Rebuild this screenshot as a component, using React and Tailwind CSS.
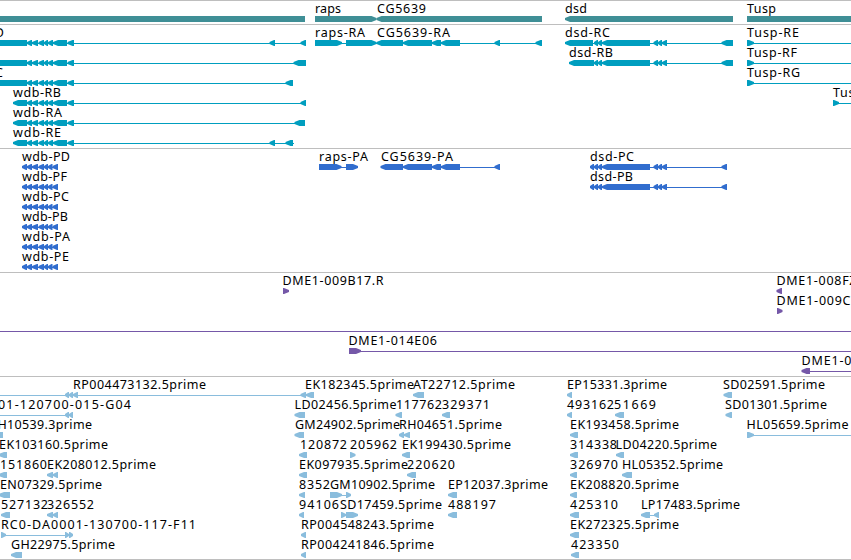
const ROW = 20;
const WIDTH = 851;

// exons shared by every wdb transcript
const WDB = [[27, 32], [32, 38], [38.5, 44], [44, 48], [48, 53], [53, 67], [67.5, 74]];
const WDB_P = [[22, 27], [27, 32], [32, 38], [38.5, 44], [44, 48], [48, 52.5], [52.5, 58]];
const DSD = [[594, 598], [598, 602], [602, 650], [653.5, 658], [658, 662], [662, 667]];

// label: [text, x, width], line: [from, to], exons: [from, to][]
const TRACKS = [
  {
    id: "genes",
    fill: "fill-[#3f8f96]",
    height: 24,
    features: [
      { row: 0, exons: [[-20, 305]], flat: true },
      { row: 0, label: ["raps", 315, 26], exons: [[315, 376.5]], fwd: true },
      { row: 0, label: ["CG5639", 377, 49], exons: [[376.5, 542]] },
      { row: 0, label: ["dsd", 565, 22], exons: [[565, 733]] },
      { row: 0, label: ["Tusp", 747, 29], exons: [[747, 880]], fwd: true },
    ],
  },
  {
    id: "transcripts",
    fill: "fill-[#009ebf]",
    height: 124,
    features: [
      { row: 0, label: ["wdb-RD", -44, 48], line: [0, 305], exons: [[-20, 27], ...WDB, [269.5, 275], [300.5, 306]] },
      { row: 1, line: [0, 305], exons: [[-20, 27], ...WDB, [293.5, 306]] },
      { row: 2, label: ["wdb-RC", -45, 48], line: [0, 293], exons: [[-20, 27], ...WDB, [285.5, 293]] },
      { row: 3, label: ["wdb-RB", 13, 48], line: [13, 305], exons: [[13, 27], ...WDB, [300.5, 306]] },
      { row: 4, label: ["wdb-RA", 13, 49], line: [13, 305], exons: [[13, 27], ...WDB, [294.5, 305]] },
      { row: 5, label: ["wdb-RE", 13, 48], line: [13, 294], exons: [[13, 27], ...WDB, [269.5, 275], [285.5, 293]] },
      { row: 0, label: ["raps-RA", 315, 50], line: [315, 377], exons: [[315, 342], [346, 376.5]], fwd: true },
      { row: 0, label: ["CG5639-RA", 377, 73], line: [377, 542], exons: [[376.5, 403], [403, 432], [432, 441], [441, 460], [494.5, 500], [535.5, 542]] },
      { row: 0, label: ["dsd-RC", 565, 45], line: [565, 733], exons: [[565, 593], ...DSD, [721.5, 733]] },
      { row: 1, label: ["dsd-RB", 569, 44], line: [569, 733], exons: [[569, 594], ...DSD, [721.5, 733]] },
      { row: 0, label: ["Tusp-RE", 747, 52], line: [747, 851], exons: [[747, 754]], fwd: true },
      { row: 1, label: ["Tusp-RF", 747, 50], line: [747, 851], exons: [[747, 754]], fwd: true },
      { row: 2, label: ["Tusp-RG", 747, 53], line: [747, 851], exons: [[747, 754]], fwd: true },
      { row: 3, label: ["Tusp-RH", 833, 53], line: [833, 851], exons: [[833, 839]], fwd: true },
    ],
  },
  {
    id: "proteins",
    fill: "fill-[#316dce]",
    height: 124,
    features: [
      { row: 0, label: ["wdb-PD", 22, 48], line: [22, 58], exons: WDB_P },
      { row: 1, label: ["wdb-PF", 22, 45], line: [22, 58], exons: WDB_P },
      { row: 2, label: ["wdb-PC", 22, 47], line: [22, 58], exons: WDB_P },
      { row: 3, label: ["wdb-PB", 22, 46], line: [22, 58], exons: WDB_P },
      { row: 4, label: ["wdb-PA", 22, 48], line: [22, 58], exons: WDB_P },
      { row: 5, label: ["wdb-PE", 22, 47], line: [22, 58], exons: WDB_P },
      { row: 0, label: ["raps-PA", 319, 49], line: [319, 358], exons: [[319, 341.5], [346, 358]], fwd: true },
      { row: 0, label: ["CG5639-PA", 381, 72], line: [381, 500], exons: [[380.5, 403], [403, 432], [432, 441], [441, 460], [494.5, 500]] },
      { row: 0, label: ["dsd-PC", 590, 44], line: [590, 727], exons: [[590, 594], ...DSD, [721.5, 727]] },
      { row: 1, label: ["dsd-PB", 590, 43], line: [590, 727], exons: [[590, 594], ...DSD, [721.5, 727]] },
    ],
  },
  {
    id: "bacs",
    fill: "fill-[#7558a8]",
    height: 104,
    features: [
      { row: 0, label: ["DME1-009B17.R", 282.5, 101], exons: [[283, 289]], fwd: true },
      { row: 0, label: ["DME1-008FZ", 776.5, 80], exons: [[776.5, 782]] },
      { row: 1, label: ["DME1-009C", 776.5, 74], exons: [[777, 782.5]], fwd: true },
      { row: 2, line: [0, 851], exons: [] },
      { row: 3, label: ["DME1-014E06", 348.5, 88.5], line: [349, 851], exons: [[349, 361]], fwd: true },
      { row: 4, label: ["DME1-0", 801.5, 50], line: [802, 851], exons: [[801.5, 810]] },
    ],
  },
  {
    id: "ests",
    fill: "fill-[#8abddd]",
    height: 183,
    features: [
      { row: 0, label: ["RP004473132.5prime", 73, 133], line: [0, 306], exons: [[65, 69], [69, 73], [73, 78]] },
      { row: 0, label: ["EK182345.5prime", 305, 109], exons: [[300.5, 306], [306, 314]] },
      { row: 0, label: ["AT22712.5prime", 413, 102], exons: [[413, 424]] },
      { row: 0, label: ["EP15331.3prime", 567, 100], exons: [[567, 572]] },
      { row: 0, label: ["SD02591.5prime", 723, 102], exons: [[723.5, 732]] },

      { row: 1, label: ["01-120700-015-G04", -2, 133], line: [0, 73], exons: [[65, 69], [69, 73]] },
      { row: 1, label: ["LD02456.5prime", 294.5, 102], exons: [[294.5, 305]] },
      { row: 1, label: ["117762", 396, 46], exons: [[395.5, 402]] },
      { row: 1, label: ["329371", 442, 48], exons: [[442, 450]] },
      { row: 1, label: ["493162", 567, 47], exons: [[567, 572]] },
      { row: 1, label: ["51669", 614, 42], exons: [[615, 624]] },
      { row: 1, label: ["SD01301.5prime", 725, 102], exons: [[725.5, 732]] },

      { row: 2, label: ["GH10539.3prime", -12, 104], exons: [[-6, 3]] },
      { row: 2, label: ["GM24902.5prime", 295, 105], exons: [[294.5, 304]] },
      { row: 2, label: ["RH04651.5prime", 399, 103], exons: [[399, 404], [404, 410]] },
      { row: 2, label: ["EK193458.5prime", 570, 109], exons: [[570, 578]] },
      { row: 2, label: ["HL05659.5prime", 746.5, 102], line: [747, 851], exons: [[747, 754]], fwd: true },

      { row: 3, label: ["EK103160.5prime", -1, 109], exons: [[-1, 7]] },
      { row: 3, label: ["120872", 300, 47], exons: [[299, 307]] },
      { row: 3, label: ["205962", 350, 47], exons: [[350, 355.5]], fwd: true },
      { row: 3, label: ["EK199430.5prime", 402, 109], exons: [[402, 410]] },
      { row: 3, label: ["314338", 570, 47], exons: [[570, 578]] },
      { row: 3, label: ["LD04220.5prime", 615.5, 101.5], exons: [[616, 624]] },

      { row: 4, label: ["151860", 0, 47], exons: [[-1, 7]] },
      { row: 4, label: ["EK208012.5prime", 47, 109], exons: [[47, 53], [53, 58]] },
      { row: 4, label: ["EK097935.5prime", 299, 109], exons: [[299, 307]] },
      { row: 4, label: ["220620", 407, 48], exons: [[407, 416]] },
      { row: 4, label: ["326970", 570, 48], exons: [[570, 577]] },
      { row: 4, label: ["HL05352.5prime", 622, 101], exons: [[622, 632]] },

      { row: 5, label: ["EN07329.5prime", 0, 102], exons: [[-1, 10]] },
      { row: 5, label: ["8352", 299, 31], exons: [[299, 305]] },
      { row: 5, label: ["GM10902.5prime", 330, 105], line: [330, 351], exons: [[330, 342], [346, 351]], fwd: true },
      { row: 5, label: ["EP12037.3prime", 448, 100], exons: [[448, 457]] },
      { row: 5, label: ["EK208820.5prime", 570, 109], exons: [[570, 577]] },

      { row: 6, label: ["527132", 1, 47], exons: [[1, 10]] },
      { row: 6, label: ["326552", 47, 47], exons: [[47, 53], [53, 58]] },
      { row: 6, label: ["94106", 299, 40], exons: [[299, 304]] },
      { row: 6, label: ["SD17459.5prime", 340, 102], exons: [[341, 346], [346, 358]], fwd: true },
      { row: 6, label: ["488197", 448, 48], exons: [[448, 457]] },
      { row: 6, label: ["425310", 570, 48], exons: [[570, 579]] },
      { row: 6, label: ["LP17483.5prime", 641, 99], line: [641, 659], exons: [[641, 650], [654, 659]] },

      { row: 7, label: ["RC0-DA0001-130700-117-F11", 1, 195], line: [1, 73], exons: [[1, 6], [65, 69], [69, 73]], fwd: true },
      { row: 7, label: ["RP004548243.5prime", 301, 133], exons: [[301, 306]] },
      { row: 7, label: ["EK272325.5prime", 570, 109], exons: [[570, 579]] },

      { row: 8, label: ["GH22975.5prime", 11, 104], exons: [[11, 22]] },
      { row: 8, label: ["RP004241846.5prime", 301, 133], exons: [[301, 306]] },
      { row: 8, label: ["423350", 571, 48], exons: [[571, 579]] },
    ],
  },
];

// block with a pointed end on the strand side
function exonPath([a, b], y, fwd, flat) {
  if (flat) return `M${a} ${y}H${b}V${y + 6}H${a}Z`;
  const head = Math.min(6, b - a);
  return fwd
    ? `M${a} ${y}H${b - head + 1}L${b} ${y + 2}V${y + 4}L${b - head + 1} ${y + 6}H${a}Z`
    : `M${b} ${y}H${a + head - 1}L${a} ${y + 2}V${y + 4}L${a + head - 1} ${y + 6}H${b}Z`;
}

function Feature({ row, label, line, exons, fwd, flat }) {
  const y = row * ROW + 16;
  return (
    <g>
      {line && <rect x={line[0]} y={y + 3} width={line[1] - line[0]} height={1} />}
      {exons.map((e, i) => (
        <path key={i} d={exonPath(e, y, fwd, flat)} />
      ))}
      {label && (
        <text x={label[1]} y={y - 3} textLength={label[2]} className="fill-black">
          {label[0]}
        </text>
      )}
    </g>
  );
}

export default function App() {
  return (
    <div className="w-[851px] h-[560px] overflow-hidden bg-white border-b border-[#bebebe] font-['Noto_Sans',sans-serif] text-[12.5px]">
      {TRACKS.map((t) => (
        <section key={t.id} className="relative overflow-hidden">
          <div className="h-px bg-[#bebebe]" />
          <svg
            width={WIDTH}
            height={t.height - 1}
            viewBox={`0 1 ${WIDTH} ${t.height - 1}`}
            className={`block ${t.fill}`}
          >
            {t.features.map((f, i) => (
              <Feature key={i} {...f} />
            ))}
          </svg>
        </section>
      ))}
    </div>
  );
}
